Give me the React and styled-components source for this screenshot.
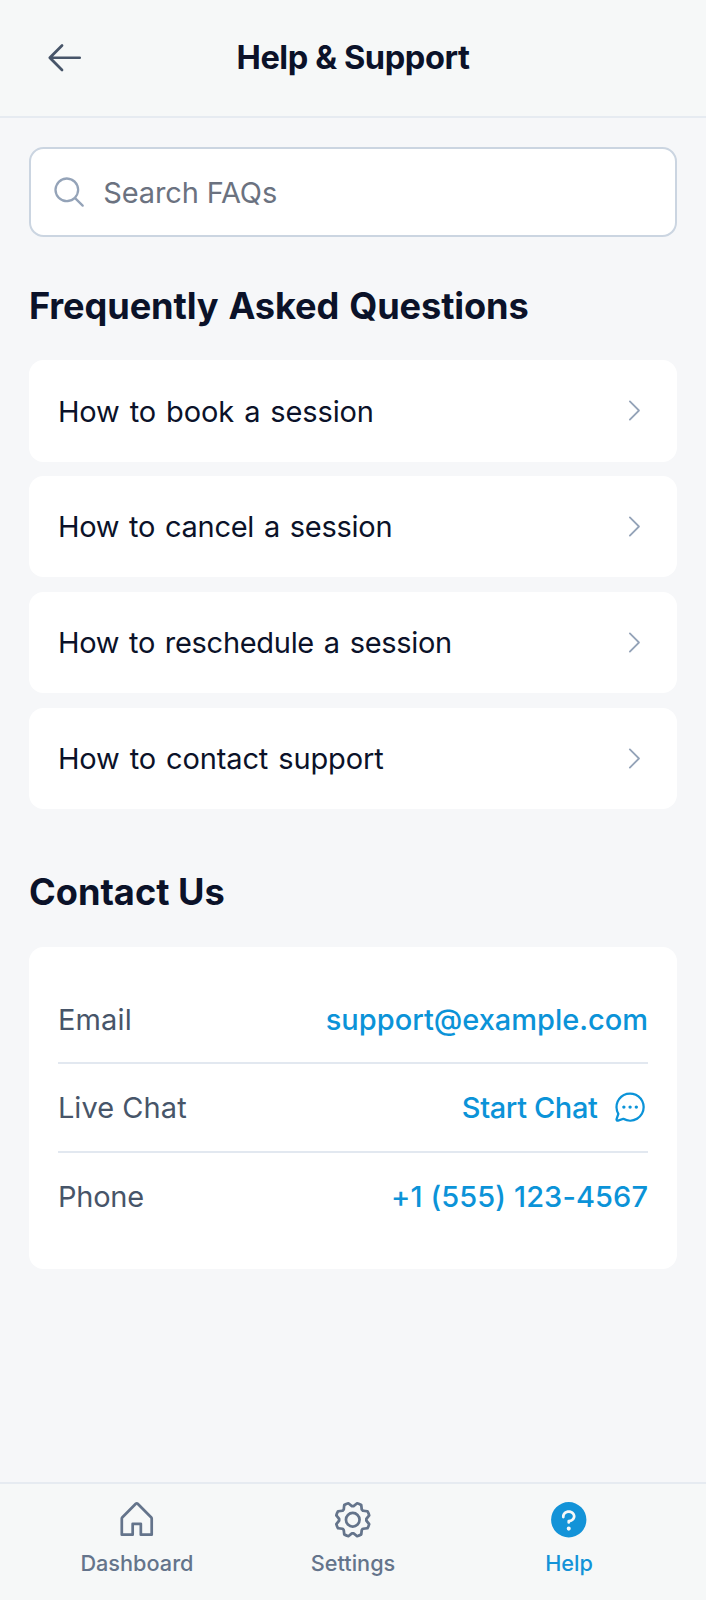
import React from "react";
import styled, { createGlobalStyle } from "styled-components";
import { PiArrowLeft, PiMagnifyingGlass, PiCaretRight, PiChatCircleDots, PiHouse, PiGear, PiQuestionFill } from "react-icons/pi";

const u = (n) => `${(n * 1.81).toFixed(2)}px`;

const GlobalStyle = createGlobalStyle`
  * { box-sizing: border-box; }
  body { margin: 0; background: #f6f7f9; }
  button, input { font: inherit; }
`;

const Screen = styled.div`
  height: 1600px;
  display: flex;
  flex-direction: column;
  background: #f6f7f9;
  color: #0b1229;
  font-family: Inter, "Liberation Sans", sans-serif;
  font-size: 29px;
  line-height: ${u(24)};
`;

const Header = styled.header`
  height: ${u(65)};
  flex: none;
  display: grid;
  grid-template-columns: ${u(40)} 1fr ${u(40)};
  align-items: center;
  padding: 0 ${u(16)};
  background: #f6f8f8;
  border-bottom: 2px solid #e6ebf1;
`;

const BackButton = styled.button`
  display: flex;
  justify-content: center;
  padding: 0;
  border: 0;
  background: none;
  color: #475569;
`;

const Title = styled.h1`
  margin: 0;
  text-align: center;
  font-size: 32.6px;
  font-weight: 700;
  letter-spacing: -0.42px;
`;

const Main = styled.main`
  flex: 1;
  padding: ${u(16)} ${u(16)} 0;
`;

const SearchBox = styled.label`
  height: ${u(50)};
  display: flex;
  align-items: center;
  gap: ${u(9)};
  padding: 0 ${u(11)};
  border: 2px solid #cbd5e1;
  border-radius: ${u(8)};
  background: #fff;
  color: #94a3b8;
`;

const SearchInput = styled.input`
  flex: 1;
  min-width: 0;
  padding: 2px 0 0;
  border: 0;
  outline: 0;
  background: none;
  letter-spacing: -0.15px;
  &::placeholder { color: #6b7280; opacity: 1; }
`;

const SectionTitle = styled.h2`
  margin: ${(p) => u(p.$top)} 0 ${u(16)};
  font-size: 36.2px;
  line-height: ${u(28)};
  font-weight: 700;
  letter-spacing: ${(p) => p.$tracking ?? 0}px;
  word-spacing: ${(p) => p.$wordGap ?? 0}px;
`;

const FaqList = styled.div`
  display: grid;
  gap: ${u(8)};
`;

const FaqItem = styled.button`
  height: ${u(56)};
  display: flex;
  align-items: center;
  justify-content: space-between;
  padding: 0 ${u(16)};
  border: 0;
  border-radius: ${u(8)};
  background: #fff;
  color: inherit;
  svg { color: #94a3b8; }
`;

const FaqLabel = styled.span`
  padding-top: 1px;
  letter-spacing: ${(p) => p.$tracking}px;
  word-spacing: 2px;
`;

const ContactCard = styled.div`
  padding: ${u(16)};
  border-radius: ${u(8)};
  background: #fff;
`;

const ContactRow = styled.div`
  height: ${u(49)};
  display: flex;
  align-items: center;
  justify-content: space-between;
  border-bottom: 2px solid #e2e8f0;
  color: #475569;
  &:last-child { border-bottom: 0; height: ${u(48)}; }
`;

const ContactText = styled.span`
  padding-top: 1px;
  letter-spacing: ${(p) => p.$tracking ?? 0}px;
`;

const ContactLink = styled.a`
  display: flex;
  align-items: center;
  gap: ${u(8)};
  color: #0b93d8;
  font-weight: 500;
`;

const Nav = styled.nav`
  height: ${u(65)};
  flex: none;
  display: grid;
  grid-template-columns: repeat(3, 1fr);
  padding: 13.5px ${u(16)} 0;
  background: #f6f8f8;
  border-top: 2px solid #e6ebf1;
`;

const NavItem = styled.a`
  display: flex;
  flex-direction: column;
  align-items: center;
  gap: ${u(4)};
  color: ${(p) => (p.$active ? "#1393d8" : "#64748b")};
  font-size: 21.7px;
  font-weight: 500;
  line-height: ${u(16)};
`;

const questions = [
  { text: "How to book a session", tracking: -0.12 },
  { text: "How to cancel a session", tracking: -0.28 },
  { text: "How to reschedule a session", tracking: -0.3 },
  { text: "How to contact support", tracking: -0.13 },
];

export default function App() {
  return (
    <Screen>
      <GlobalStyle />
      <Header>
        <BackButton aria-label="Back"><PiArrowLeft size={43.5} /></BackButton>
        <Title>Help &amp; Support</Title>
      </Header>
      <Main>
        <SearchBox>
          <PiMagnifyingGlass size={36.2} />
          <SearchInput placeholder="Search FAQs" />
        </SearchBox>
        <SectionTitle $top={24} $tracking={-0.12} $wordGap={1.5}>Frequently Asked Questions</SectionTitle>
        <FaqList>
          {questions.map((q) => (
            <FaqItem key={q.text}>
              <FaqLabel $tracking={q.tracking}>{q.text}</FaqLabel>
              <PiCaretRight size={29} />
            </FaqItem>
          ))}
        </FaqList>
        <SectionTitle $top={32}>Contact Us</SectionTitle>
        <ContactCard>
          <ContactRow>
            <ContactText $tracking={0.15}>Email</ContactText>
            <ContactLink><ContactText>support@example.com</ContactText></ContactLink>
          </ContactRow>
          <ContactRow>
            <ContactText $tracking={0.05}>Live Chat</ContactText>
            <ContactLink><ContactText $tracking={-0.4}>Start Chat</ContactText><PiChatCircleDots size={36.2} /></ContactLink>
          </ContactRow>
          <ContactRow>
            <ContactText $tracking={-0.2}>Phone</ContactText>
            <ContactLink><ContactText $tracking={0.1}>+1 (555) 123-4567</ContactText></ContactLink>
          </ContactRow>
        </ContactCard>
      </Main>
      <Nav>
        <NavItem><PiHouse size={43.5} />Dashboard</NavItem>
        <NavItem><PiGear size={43.5} />Settings</NavItem>
        <NavItem $active><PiQuestionFill size={43.5} />Help</NavItem>
      </Nav>
    </Screen>
  );
}
